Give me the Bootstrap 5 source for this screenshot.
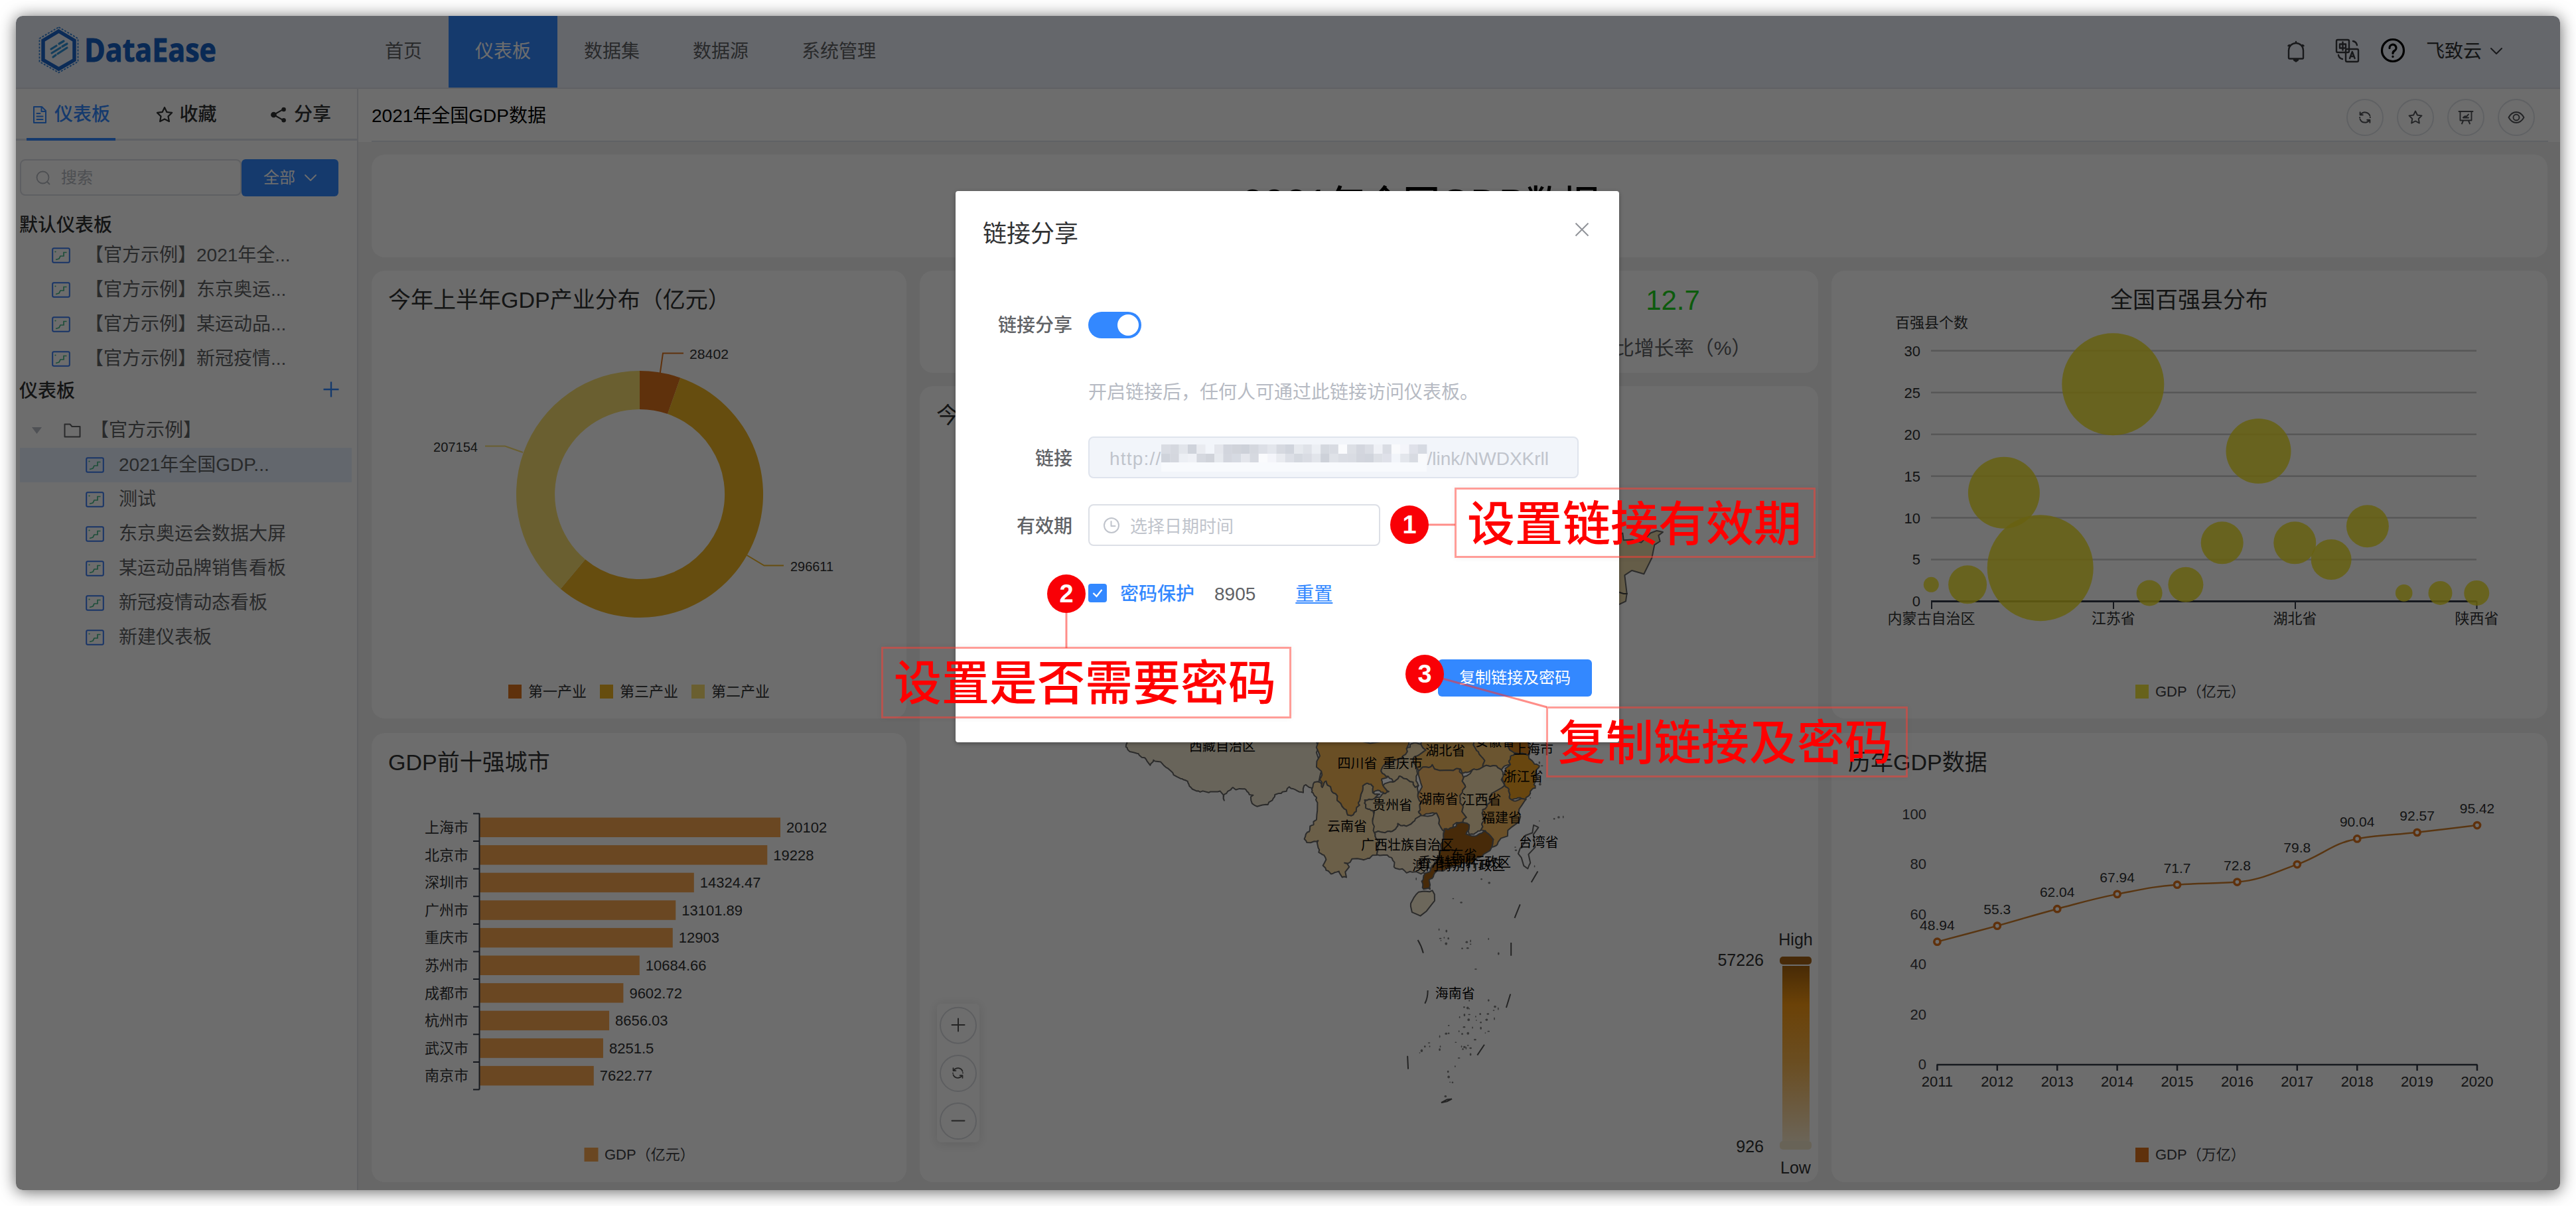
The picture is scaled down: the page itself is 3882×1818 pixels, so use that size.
<!DOCTYPE html>
<html lang="zh-CN">
<head>
<meta charset="utf-8">
<title>DataEase</title>
<link href="https://cdn.jsdelivr.net/npm/bootstrap@5.3.0/dist/css/bootstrap.min.css" rel="stylesheet">
<style>
body{margin:0;background:#fff;width:3882px;height:1818px;overflow:hidden;position:relative;font-family:"Liberation Sans","Noto Sans CJK SC",sans-serif;font-size:28px;line-height:40px;color:#303133}
svg{display:block;flex:none;overflow:visible}
svg text{font-family:"Liberation Sans","Noto Sans CJK SC",sans-serif}
.ico{fill:none;stroke:currentColor;stroke-linecap:round;stroke-linejoin:round}
.app-window{position:relative;width:3834px;height:1770px;margin:24px;border-radius:10px;overflow:hidden;background:#fff}
.app-shadow{position:absolute;left:24px;top:24px;width:3834px;height:1770px;border-radius:10px;box-shadow:0 2px 24px rgba(0,0,0,.62)}
.topnav{height:110px;background:#ecf0fa;border-bottom:2px solid #e0e3ea;padding-left:34px}
.topnav .nav-item2{padding:0 40px;height:108px;line-height:107px;color:#606266}
.topnav .on{background:#3388ff;color:#fff}
.side{width:516px;border-right:2px solid #e0e3e8;color:#606266}
.side-tabs{height:78px;border-bottom:3px solid #dfe4ed;color:#303133;font-weight:500;padding:2px 39px 0 24px}
.side-tabs .tab-on{color:#3388ff}
.tab-bar{width:134px;height:4px;background:#3388ff;margin:-4px 0 0 16px}
.search-box{width:334px;height:55px;border:2px solid #dcdfe6;border-radius:8px;color:#b4b8c0;font-size:24px;padding-left:21px}
.all-btn{width:146px;height:56px;background:#3388ff;color:#fff;border-radius:6px;font-size:24px}
.side-h{height:46px;line-height:46px;padding-left:5px;color:#303133;font-weight:500}
.side-row{height:52px;line-height:52px;white-space:nowrap}
.side-row.d1{padding-left:54px}
.side-row.d2{padding-left:99px;margin:0 8px 0 6px}
.side-row.sel{background:#e8f1ff}
.pagebar{height:80px;padding-left:20px;padding-right:18px}
.pagebar>div{border-bottom:2px solid #dfe3ea;color:#000}
.round-btn{width:56px;height:56px;border:2px solid #dfe2e8;border-radius:50%;color:#505257}
.board{background:#f0f0f0;flex:1;padding:19px 19px 12px 20px;display:grid;grid-template-columns:806px 1354px 1079px;grid-template-rows:155px 675px 679px;gap:20px}
.panel{background:#fff;border-radius:20px;overflow:hidden;display:flex;flex-direction:column}
.panel-low{margin-top:2px}
.panel-title{height:72px;flex:none;padding:16px 26px 0 25px;font-size:34px;line-height:56px;color:#303133}
.big-title{font-size:56px;font-weight:500;color:#000;line-height:150px;padding-right:118px}
.big-title span{font-size:59px;line-height:1}
.kpi-num{font-size:42px;line-height:52px;color:#1fd41f}
.kpi-name{font-size:30px;line-height:44px;margin-top:24px;color:#606266}
.shade{position:absolute;inset:0;background:rgba(0,0,0,.573)}
.share-modal{position:absolute;left:1440px;top:288px;width:1000px;height:831px;background:#fff;border-radius:4px;box-shadow:0 2px 6px rgba(0,0,0,.3);padding:45px 41px 0 0}
.f-label{width:176px;text-align:right;color:#606266;font-weight:500;margin-right:24px;line-height:36px;padding-top:4px}
.t-low{line-height:36px;padding-top:4px}
.switch-on{width:80px;height:40px;border-radius:20px;background:#3388ff;padding:4px}
.switch-on i{display:block;width:32px;height:32px;border-radius:50%;background:#fff;margin-left:auto}
.f-link{width:739px;height:63px;border:2px solid #dfe4ed;border-radius:8px;background:#f2f5fa;color:#c0c4cc;padding-left:30px}
.f-date{width:440px;height:63px;border:2px solid #dcdfe6;border-radius:8px;color:#c0c4cc;font-size:26px;padding-left:20px}
.copy-btn{width:232px;height:56px;background:#3388ff;color:#fff;border-radius:6px;font-size:24px}
.note-box{position:absolute;border:3px solid rgba(255,60,50,.5);color:#f00;font-size:72px;font-weight:500;line-height:104px;white-space:nowrap;box-shadow:0 0 8px rgba(0,0,0,.06)}
.note-dot{position:absolute;width:58px;height:58px;border-radius:50%;background:#f90006;color:#fff;font:700 38px/58px "Liberation Sans",sans-serif;text-align:center}
.note-lines{position:absolute;left:0;top:0}
</style>
</head>
<body>
<svg width="0" height="0" class="position-absolute">
 <defs>
  <symbol id="board" viewBox="0 0 28 24"><rect x="1.2" y="1.2" width="25.6" height="21.6" rx="2" fill="none" stroke="#3a7bf0" stroke-width="2"/><path d="M6 18.500l5-1.500 2-4h5V7.500h4.500" fill="none" stroke="#48b88a" stroke-width="1.700"/><circle cx="5.500" cy="6.500" r="1.100" fill="#48b88a"/></symbol>
  <symbol id="refresh" viewBox="0 0 24 24"><path d="M20 9A8.500 8.500 0 0 0 5 7.500M4 3.500V8h4.500M4 15a8.500 8.500 0 0 0 15 1.500M20 20.500V16h-4.500M3.500 12v.5M20.500 11.500v.5"/></symbol>
  <symbol id="star" viewBox="0 0 24 24"><path d="M12 2.500l2.900 6 6.600.9-4.800 4.600 1.200 6.600L12 17.500l-5.900 3.100L7.300 14 2.500 9.400l6.600-.9z"/></symbol>
 </defs>
</svg>
<div class="app-shadow"></div>
<div class="app-window d-flex flex-column">
 <header class="topnav d-flex">
  <svg width="282" height="108" viewBox="58 24 282 108">
   <path d="M88.500 47l23.500 14v29.500L88.500 104 65 90.500V61z" fill="none" stroke="#1a66cc" stroke-width="5.500"/>
   <path d="M88.500 41l29 17v35L88.500 109.500 59.500 93V58z" fill="none" stroke="#2f7fd6" stroke-width="1.800" stroke-dasharray="3 2"/>
   <path d="M77 74l8-5m4-3l7-4M78 80l13-8m3-2l7-4M80 86l4-3m3-2l14-9" stroke="#2f92d8" stroke-width="3.200" stroke-linecap="round"/>
   <text x="127" y="93" font-size="49" font-weight="700" fill="#1661c4" stroke="#1661c4" textLength="199" lengthAdjust="spacingAndGlyphs" style="font-family:'Open Sans','Noto Sans',sans-serif">DataEase</text>
  </svg>
  <nav class="d-flex" style="margin-left:200px">
   <div class="nav-item2">首页</div><div class="nav-item2 on">仪表板</div><div class="nav-item2">数据集</div><div class="nav-item2">数据源</div><div class="nav-item2">系统管理</div>
  </nav>
  <svg class="ms-auto" width="438" height="108" viewBox="3420 24 438 108">
   <g class="ico" stroke="#303133" color="#3a3b3f" stroke-width="2.400">
    <path d="M3449 87v-11a11 11 0 0 1 22 0v11q0 1.500-1.500 1.500h-19q-1.500 0-1.500-1.500zM3460 63v2M3448.500 69l1.500-1M3471.500 69l-1.500-1M3457 90.500h6l-3 2z"/>
    <rect x="3521" y="60" width="19" height="19" rx="2"/><rect x="3535" y="74" width="19" height="19" rx="2"/>
    <path d="M3526 66.500h9v6h-9zM3530.500 63.500v12M3541 88l3.800-10 3.800 10M3542.500 85h4.500M3546 62q5 1 6 6M3524 83q1 5 6 6"/>
    <circle cx="3606" cy="76" r="16.500" stroke="#000" stroke-width="3.200"/><path d="M3601 72.500a5 5 0 1 1 7.500 4q-2.500 1.500-2.500 4M3606 85v.4" stroke="#000" stroke-width="3.200"/>
    <path d="M3754 73l8 8 8-8" stroke-width="2"/>
   </g>
   <text x="3656" y="87" font-size="28" fill="#303133">飞致云</text>
  </svg>
 </header>
 <div class="d-flex flex-grow-1">
  <aside class="side flex-shrink-0">
   <div class="side-tabs d-flex align-items-center justify-content-between">
    <div class="tab-on d-flex align-items-center gap-2"><svg class="ico" width="24" height="28" viewBox="0 0 24 28" stroke-width="2"><path d="M3 2h12l6 6v18H3zM14.500 2v7H21M7.500 12h5M7.500 16.500h9M7.500 21h9"/></svg><span style="margin-left:2px">仪表板</span></div>
    <div class="d-flex align-items-center gap-2" style="margin-right:12px"><svg class="ico" width="28" height="28" stroke-width="1.900"><use href="#star"/></svg><span>收藏</span></div>
    <div class="d-flex align-items-center gap-2"><svg width="26" height="26" viewBox="0 0 24 24"><path d="M19 4L5 12l14 8" fill="none" stroke="#303133" stroke-width="2"/><circle cx="5" cy="12" r="4" fill="#303133"/><circle cx="19" cy="4.500" r="3" fill="#303133"/><circle cx="19" cy="19.500" r="3" fill="#303133"/></svg><span style="margin-left:2px">分享</span></div>
   </div>
   <div class="tab-bar"></div>
   <div class="d-flex" style="padding:28px 0 0 6px">
    <div class="search-box d-flex align-items-center"><svg class="ico" width="24" height="24" viewBox="0 0 24 24" stroke-width="1.800"><circle cx="11.500" cy="11.500" r="9"/><path d="M18 18l3.500 3.500"/></svg><span style="margin-left:15px">搜索</span></div>
    <div class="all-btn d-flex align-items-center justify-content-center">全部<svg class="ico" style="margin-left:14px" width="18" height="12" viewBox="0 0 18 12" stroke-width="1.800"><path d="M1 2l8 8 8-8"/></svg></div>
   </div>
   <div class="side-h" style="margin-top:21px">默认仪表板</div>
   <div id="defaults" style="margin-top:-4px"></div>
   <div class="side-h d-flex justify-content-between align-items-center" style="padding-right:26px">仪表板<svg style="margin-bottom:6px" width="26" height="26" viewBox="0 0 26 26"><path d="M13 1.500v23M1.500 13h23" stroke="#3388ff" stroke-width="2.400"/></svg></div>
   <div class="side-row d-flex align-items-center" style="padding-left:24px;margin-top:10px"><svg width="15" height="10" viewBox="0 0 15 10"><path d="M0 0h15L7.500 10z" fill="#b9bdc6"/></svg><svg class="ico" style="margin:0 14px 0 33px" width="26" height="22" viewBox="0 0 26 22" stroke-width="2"><path d="M1.500 20.500v-19h8l3 3.500h12v15.500z"/></svg>【官方示例】</div>
   <div id="mine"></div>
  </aside>
  <main class="d-flex flex-column flex-grow-1">
   <div class="pagebar"><div class="h-100 d-flex align-items-center justify-content-between"><span style="padding-top:4px">2021年全国GDP数据</span>
    <div class="d-flex" style="gap:20px;padding:8px 20px 0 0">
     <div class="round-btn d-flex align-items-center justify-content-center"><svg class="ico" width="22" height="22" stroke-width="2.200"><use href="#refresh"/></svg></div>
     <div class="round-btn d-flex align-items-center justify-content-center"><svg class="ico" width="24" height="24" stroke-width="1.900"><use href="#star"/></svg></div>
     <div class="round-btn d-flex align-items-center justify-content-center"><svg class="ico" width="24" height="24" viewBox="0 0 24 24" stroke-width="1.900"><path d="M1.500 3h21M3.500 3v13.500h17V3M8 17l-2 4.500M16 17l2 4.500M8 12.500h8M8 12l3-2 1.500 1L16 7.500"/></svg></div>
     <div class="round-btn d-flex align-items-center justify-content-center"><svg class="ico" width="26" height="24" viewBox="0 0 26 24" stroke-width="1.900"><path d="M1.500 12Q6 4 13 4t11.500 8Q20 20 13 20T1.500 12z"/><circle cx="13" cy="12" r="4.500"/></svg></div>
    </div></div></div>
   <div class="board">
    <section class="panel" style="grid-column:1/4"><div class="big-title text-center"><span>2021</span>年全国<span>GDP</span>数据</div></section>
    <section class="panel"><div class="panel-title">今年上半年GDP产业分布（亿元）</div><svg id="donut" width="806" height="603" viewBox="560 480 806 603"></svg></section>
    <div class="d-flex flex-column" style="grid-row:2/4;grid-column:2;gap:20px">
     <div class="d-flex" style="height:154px;gap:20px">
      <section class="panel flex-fill w-100"></section>
      <section class="panel flex-fill w-100"></section>
      <section class="panel flex-fill w-100 text-center text-nowrap" style="padding-top:19px"><div class="kpi-num">12.7</div><div class="kpi-name">同比增长率（%）</div></section>
     </div>
     <section class="panel flex-grow-1"><div class="panel-title">今</div><svg id="cnmap" width="1354" height="1128" viewBox="1386 654 1354 1128"></svg></section>
    </div>
    <section class="panel" style="grid-column:3"><div class="panel-title text-center">全国百强县分布</div><svg id="bubble" width="1079" height="603" viewBox="2760 480 1079 603"></svg></section>
    <section class="panel panel-low"><div class="panel-title">GDP前十强城市</div><svg id="bars" width="806" height="605" viewBox="560 1177 806 605"></svg></section>
    <section class="panel panel-low" style="grid-column:3"><div class="panel-title">历年GDP数据</div><svg id="line" width="1079" height="605" viewBox="2760 1177 1079 605"></svg></section>
   </div>
  </main>
 </div>
 <div class="shade"></div>
</div>

<div class="share-modal">
 <div class="d-flex justify-content-between" style="padding-left:41px;font-size:36px;color:#303133"><span>链接分享</span><svg style="margin:2px 4px 0 0" width="22" height="22" viewBox="0 0 22 22"><path d="M1.500 1.500l19 19M20.500 1.500l-19 19" stroke="#909399" stroke-width="2"/></svg></div>
 <div class="d-flex align-items-center" style="margin-top:97px"><div class="f-label" style="padding-top:2px;line-height:38px">链接分享</div><div class="switch-on"><i></i></div></div>
 <div class="t-low" style="margin:60px 0 0 200px;color:#b6bac3">开启链接后，任何人可通过此链接访问仪表板。</div>
 <div class="d-flex align-items-center" style="margin-top:48px"><div class="f-label">链接</div><div class="f-link d-flex align-items-center"><span class="t-low" style="letter-spacing:1.200px">http://</span><svg id="mosaic" width="400" height="42" viewBox="0 0 400 42"></svg><span class="t-low">/link/NWDXKrll</span></div></div>
 <div class="d-flex align-items-center" style="margin-top:39px"><div class="f-label">有效期</div><div class="f-date d-flex align-items-center"><svg class="ico" width="26" height="26" viewBox="0 0 26 26" stroke-width="2"><circle cx="13" cy="13" r="11"/><path d="M12.500 7v7h6"/></svg><span class="t-low" style="margin-left:15px">选择日期时间</span></div></div>
 <div class="d-flex align-items-center" style="margin:51px 0 0 200px"><svg width="28" height="28" viewBox="0 0 28 28"><rect width="28" height="28" rx="4" fill="#3388ff"/><path d="M7.500 14l5 5 8-10" fill="none" stroke="#fff" stroke-width="2.300"/></svg><span class="t-low" style="margin-left:20px;color:#3388ff;font-weight:500">密码保护</span><span class="t-low" style="margin-left:30px;color:#606266">8905</span><span class="t-low" style="margin-left:60px;color:#3388ff;text-decoration:underline;text-underline-offset:3px">重置</span></div>
 <div class="copy-btn d-flex align-items-center justify-content-center ms-auto" style="margin-top:80px">复制链接及密码</div>
</div>

<svg class="note-lines" width="3882" height="1818" viewBox="0 0 3882 1818" fill="none" stroke="rgba(255,50,40,.55)" stroke-width="3"><path d="M2150 791h43M1607 922v55M2174 1023l157 43"/></svg>
<div class="note-box" style="left:2192px;top:735px;width:544px;height:106px;padding-left:16px">设置链接有效期</div>
<div class="note-box" style="left:1328px;top:975px;width:618px;height:108px;padding-left:16px">设置是否需要密码</div>
<div class="note-box" style="left:2330px;top:1065px;width:545px;height:107px;padding-left:15px">复制链接及密码</div>
<div class="note-dot" style="left:2095px;top:762px">1</div>
<div class="note-dot" style="left:1578px;top:866px">2</div>
<div class="note-dot" style="left:2118px;top:987px">3</div>

<script>
const $=id=>document.getElementById(id);
const T=(x,y,s,o={})=>`<text x="${x}" y="${y+(o.f||22)*.36}" font-size="${o.f||22}" fill="${o.c||'#303133'}" text-anchor="${o.a||'start'}" ${o.w?`textLength="${o.w}" lengthAdjust="spacingAndGlyphs"`:''}>${s}</text>`;
const R=(x,y,w,h,c)=>`<rect x="${x}" y="${y}" width="${w}" height="${h}" fill="${c}"/>`;
const P=(d,c,w=2)=>`<path d="${d}" fill="none" stroke="${c}" stroke-width="${w}"/>`;
// sidebar lists
const ic='<svg width="28" height="24" style="margin-right:SPpx"><use href="#board"/></svg>';
$('defaults').innerHTML=['2021年全...','东京奥运...','某运动品...','新冠疫情...'].map(t=>`<div class="side-row d1 d-flex align-items-center">${ic.replace('SP','22')}【官方示例】${t}</div>`).join('');
$('mine').innerHTML=['2021年全国GDP...','测试','东京奥运会数据大屏','某运动品牌销售看板','新冠疫情动态看板','新建仪表板'].map((t,i)=>`<div class="side-row d2 d-flex align-items-center ${i?'':'sel'}">${ic.replace('SP','22')}${t}</div>`).join('');
// donut
(()=>{const cx=964,cy=745,ro=186,ri=128,v=[28402,296611,207154],c=['#de731c','#efb425','#f8de70'];let a=0,h='';const t=v.reduce((p,q)=>p+q);
const pt=(r,a)=>[cx+r*Math.sin(a),cy-r*Math.cos(a)].map(n=>n.toFixed(1)).join(' ');
v.forEach((n,i)=>{const b=a+n/t*2*Math.PI,l=b-a>Math.PI?1:0;h+=`<path d="M${pt(ro,a)}A${ro} ${ro} 0 ${l} 1 ${pt(ro,b)}L${pt(ri,b)}A${ri} ${ri} 0 ${l} 0 ${pt(ri,a)}Z" fill="${c[i]}"/>`;a=b});
h+=P('M994.700 563L999 532.500H1030',c[0])+P('M1125.600 837L1151.500 852.500H1181',c[1])+P('M788 682L761 672.500H731',c[2]);
h+=T(1039,533,'28402',{f:21,w:59})+T(1191,853.500,'296611',{f:21,w:65})+T(653,673.500,'207154',{f:21,w:67});
[['第一产业',766],['第三产业',904],['第二产业',1042]].forEach(([s,x],i)=>h+=R(x,1032,20,21,c[i])+T(x+30,1042,s));
$('donut').innerHTML=h})();
// horizontal bars
(()=>{const d=[['上海市',20102],['北京市',19228],['深圳市',14324.47],['广州市',13101.89],['重庆市',12903],['苏州市',10684.66],['成都市',9602.72],['杭州市',8656.03],['武汉市',8251.5],['南京市',7622.77]];let h='';
d.forEach(([n,v],i)=>{const y=1247+41.6*i,w=v/20102*453;h+=R(723,y-14.500,w,29.500,'#f8a650')+T(706,y,n,{a:'end'})+T(723+w+9,y,v)});
let p='M722.500 1226V1642.500';for(let i=0;i<=10;i++)p+=`M713 ${1226.500+41.600*i}h9.500`;
h+=P(p,'#333a48')+R(880.500,1730,21,21,'#f8a650')+T(911,1740.500,'GDP（亿元）',{c:'#404145'});$('bars').innerHTML=h})();
// bubbles
(()=>{const y0=906.5,k=12.59,x0=2910.3,dx=54.8;let h='';
for(let v=0;v<=30;v+=5){const y=y0-k*v;h+=P(`M2910 ${y}H3732`,v?'#ccc':'#333a48',v?2.500:3)+T(2894,y,v,{a:'end'})}
h+=P('M2911 906v12M3185 906v12M3459 906v12M3732.500 906v12','#333a48');
[[0,2,11.5],[1,2,29],[2,13,54],[3,4,80],[5,26,77],[6,1,19.5],[7,2,26.5],[8,7,32],[9,18,49],[10,7,32],[11,5,30.5],[12,9,32],[13,1,12.8],[14,1,18],[15,1,19]].forEach(([i,v,r])=>h+=`<circle cx="${x0+dx*i}" cy="${y0-k*v}" r="${r}" fill="#f2e226" fill-opacity=".84"/>`);
h+=T(2856,486.500,'百强县个数');[['内蒙古自治区',2910.500],['江苏省',3184.700],['湖北省',3458.500],['陕西省',3732.500]].forEach(([s,x])=>h+=T(x,932,s,{a:'middle'}));
h+=R(3218,1032,20,21,'#f2e640')+T(3248,1042,'GDP（亿元）',{c:'#404145'});$('bubble').innerHTML=h})();
// yearly line
(()=>{const v=[48.94,55.3,62.04,67.94,71.7,72.8,79.8,90.04,92.57,95.42],pts=v.map((n,i)=>[2919.4+90.4*i,1604.5-n*3.777]);let h='';
const m=[];for(let i=0;i<10;i++){const s=j=>(pts[j+1][1]-pts[j][1])/90.4;if(!i)m.push(s(0));else if(i==9)m.push(s(8));else{const a=s(i-1),b=s(i);m.push(2*a*b/(a+b))}}
let p=`M${pts[0]}`;for(let i=0;i<9;i++)p+=`C${pts[i][0]+36} ${pts[i][1]+36*m[i]} ${pts[i+1][0]-36} ${pts[i+1][1]-36*m[i+1]} ${pts[i+1]}`;
h+=P(p,'#d07e2a',2.5);
pts.forEach(([x,y],i)=>h+=`<circle cx="${x}" cy="${y}" r="4.600" fill="#fff" stroke="#de731c" stroke-width="3.600"/>`+T(x,y-25.5,v[i],{a:'middle',f:21})+T(x,1630,2011+i,{a:'middle'}));
for(let n=0;n<=100;n+=20)h+=T(2903,1604-n*3.77,n,{a:'end',c:'#404145',f:22});
let t='M2918.500 1605H3733.500';for(let i=0;i<10;i++)t+=`M${2919.400+90.400*i} 1605v9`;h+=P(t,'#333a48',2.500);
h+=R(3218,1730,20,22,'#de731c')+T(3248,1740.500,'GDP（万亿）',{c:'#404145'});$('line').innerHTML=h})();
// map regions
(()=>{const reg=[
['#f4ead3','36,24 38,48 60,60 82,78 108,108 118,88 150,108 178,136 192,152 218,165 228,180 252,206 290,212 325,206 338,242 345,215 365,192 395,198 412,210 428,222 432,260 474,258 490,235 515,215 540,190 565,205 584,212 592,182 612,195 628,185 634,160 636,100 625,0 36,0'],
['#fbdea9','612,195 628,170 643,192 655,168 672,205 690,225 705,265 722,297 748,284 755,250 768,205 782,176 795,180 800,212 822,218 800,240 775,240 778,270 800,280 800,320 808,380 820,400 812,450 780,465 735,465 712,480 718,535 705,535 695,512 670,522 645,490 648,450 632,440 630,395 595,402 592,370 605,340 625,315 628,250 625,230 610,210'],
['#f8b957','625,0 632,60 640,130 637,165 643,192 655,168 672,205 690,225 705,265 722,297 748,284 755,250 768,205 782,176 795,180 800,212 822,205 838,216 850,208 832,185 828,160 848,150 826,130 835,108 858,95 890,80 905,45 920,0'],
['#f8e1b2','905,45 920,26 950,26 965,50 930,75 925,95 940,120 935,150 942,185 932,192 905,160 882,150 862,172 848,150 826,130 835,108 858,95 890,80'],
['#f8c062','950,0 950,26 965,50 930,75 925,95 940,120 942,130 955,115 985,106 1050,128 1072,122 1080,138 1110,125 1142,115 1138,75 1120,45 1122,0'],
['#fac872','1122,0 1120,45 1138,75 1142,115 1165,112 1200,125 1228,105 1228,80 1240,60 1225,0'],
['#d9841c','1225,0 1240,60 1285,70 1292,40 1290,0'],
['#f3a425','1228,80 1240,65 1285,70 1295,90 1318,110 1308,150 1305,195 1290,215 1276,238 1250,232 1232,240 1222,205 1210,185 1202,150 1212,120 1228,105'],
['#f8e1b2','1142,115 1165,112 1200,125 1205,150 1210,185 1180,215 1165,225 1155,265 1140,290 1136,355 1120,365 1100,372 1090,340 1078,330 1080,270 1072,235 1088,190 1082,155 1110,125'],
['#fdc06c','942,130 955,115 985,106 1050,128 1072,122 1082,155 1088,190 1072,235 1080,270 1078,330 1050,335 1035,352 1010,362 1005,330 998,290 975,292 950,300 942,285 950,250 940,220'],
['#f8e1b2','862,172 882,150 905,160 932,192 942,185 940,220 950,250 942,285 948,302 930,320 905,340 878,330 860,360 838,365 805,365 800,330 800,280 778,270 775,240 805,235 830,216 850,208 832,185'],
['#fbeacc','805,365 838,365 860,360 878,330 905,340 930,320 955,300 998,290 1005,330 1020,370 1010,410 1005,465 985,500 950,522 905,518 870,500 862,470 845,450 812,450 820,400'],
['#f9bc60','1155,265 1165,225 1210,185 1222,205 1232,240 1276,238 1255,275 1230,345 1190,400 1170,420 1168,380 1150,358 1136,355 1140,290'],
['#a66217','1020,370 1022,350 1050,345 1060,332 1100,335 1090,370 1130,370 1150,358 1168,380 1170,420 1140,455 1110,480 1060,490 1020,510 990,525 975,545 978,580 958,580 952,550 960,520 985,490 1005,465 1010,410'],
['#fff','1300,336 1315,345 1305,420 1290,480 1282,502 1262,460 1258,425 1275,375'],
['#fdf0d6','935,600 960,588 985,585 992,605 982,640 948,682 922,668 918,635']];
const hs=(x,y)=>{const s=Math.sin(x*12.9898+y*78.233)*43758.5453;return s-Math.floor(s)-.5};
const sub=(a,b,n)=>{const L=Math.hypot(a[0]-b[0],a[1]-b[1]);if(!n||L<7)return[a];const x=(a[0]+b[0])/2,y=(a[1]+b[1])/2,m=[x+hs(x,y)*L*.45,y+hs(y,x)*L*.45];return[...sub(a,m,n-1),...sub(m,b,n-1)]};
const poly=([c,s],k=2)=>{const p=s.split(' ').map(q=>q.split(',').map(Number));let o=[];p.forEach((a,i)=>o.push(...sub(a,p[(i+1)%p.length],k)));return`<polygon points="${o.map(q=>q.map(n=>n.toFixed(1)).join()).join(' ')}" fill="${c}" stroke="#666" stroke-width="2" vector-effect="non-scaling-stroke" stroke-linejoin="round"/>`};
let h='<g transform="translate(1681 1111) scale(.4847 .3954)">'+reg.map(r=>poly(r,r[0]=='#fff'||r[0]=='#fdf0d6'?1:2)).join('');
h+='<path d="M1313 512l-20 42M1258 638l-17 52M1230 784v50M1228 980l-13 52M1147 1173l-22 40M908 1216l2 50M971 966q0 30-9 50M940 774q12 24 17 50M1013 1394l18-12 15-2-15 9z" fill="none" stroke="#555" stroke-width="2" vector-effect="non-scaling-stroke"/>';
[[1318,320],[1364,312],[1378,306],[1392,305],[1243,420],[1245,432],[1303,493],[1318,98],[1326,110],[1322,130],[1313,160],[1320,180],[1290,232],[1138,542],[1162,556],[935,541],[1050,616],[1075,631],[1006,734],[1029,740],[1010,768],[1022,765],[1035,768],[1028,788],[1012,776],[1078,806],[1092,782],[1104,778],[1104,790],[1095,805],[1160,770],[1191,826],[1120,885],[1100,1005],[1160,1004],[1095,1033],[1100,1036],[1084,1030],[1180,1028],[1190,1036],[1176,1042],[1158,1056],[1070,1068],[1085,1060],[1100,1058],[1120,1066],[1134,1056],[1098,1078],[1122,1080],[1136,1088],[1154,1078],[1178,1074],[1036,1100],[1084,1106],[1110,1108],[1136,1110],[1160,1122],[1068,1122],[1078,1132],[1096,1130],[1150,1128],[1036,1130],[1028,1131],[1008,1142],[1058,1164],[1118,1154],[1010,1180],[1008,1192],[975,1166],[977,1180],[962,1180],[952,1196],[946,1204],[1080,1190],[1085,1182],[1090,1186],[1096,1176],[1104,1186],[1076,1180],[1104,1210],[1068,1224],[1056,1256],[1034,1276],[1036,1296],[1040,1316],[1048,1317],[1026,1370]].forEach(([x,y],i)=>h+=`<ellipse cx="${x}" cy="${y}" rx="${1.8+i%3}" ry="${2.2+i%4}" fill="#808080"/>`);
h+='</g><g transform="translate(2400 400) scale(.3333 .3571)">'+poly(['#ecd9a8','100,1150 136,1130 140,1160 180,1158 220,1170 262,1130 290,1120 318,1126 298,1140 305,1165 280,1180 268,1235 232,1303 178,1288 145,1308 155,1385 150,1418 100,1440'],0)+'<path d="M120 1380l20 6h18" fill="none" stroke="#444" stroke-width="2" vector-effect="non-scaling-stroke"/></g>';
[['西藏自治区',332,36],['四川省',752,100],['重庆市',893,100],['湖北省',1026,52],['安徽省',1180,18],['上海市',1300,48],['浙江省',1268,150],['湖南省',1005,236],['江西省',1138,240],['贵州省',861,261],['福建省',1201,307],['云南省',720,342],['广西壮族自治区',908,412],['广东省',1062,450],['香港特别行政区',1085,478],['澳门特别行政区',1067,490],['台湾省',1316,402],['海南省',1056,978]].forEach(([s,x,y])=>h+=T(1681+x*.4847,1111+y*.3954,s,{a:'middle',f:20,c:'#000'}));
h+='<defs><linearGradient id="heat" x1="0" y1="0" x2="0" y2="1"><stop offset="0" stop-color="#a8640f"/><stop offset=".22" stop-color="#fa9a12"/><stop offset=".55" stop-color="#f9b54e"/><stop offset="1" stop-color="#fbeacc"/></linearGradient></defs>';
h+='<rect x="2686" y="1456" width="41" height="264" fill="url(#heat)"/><rect x="2682" y="1442" width="48" height="12" rx="5" fill="#a66217"/><rect x="2682" y="1720" width="48" height="13" rx="5" fill="#f4e8cc"/>';
h+=T(2706,1416,'High',{f:25,a:'middle'})+T(2706,1760,'Low',{f:25,a:'middle'})+T(2658,1447,'57226',{f:25,a:'end'})+T(2658,1728,'926',{f:25,a:'end'});
h+='<rect x="1412" y="1513" width="64" height="209" rx="6" fill="#fff" style="filter:drop-shadow(0 2px 8px rgba(0,0,0,.12))"/><g class="ico" style="color:#555" stroke-width="2">'+[1545.7,1618,1690].map(y=>`<circle cx="1444" cy="${y}" r="27" stroke="#d9dbe0" stroke-width="2"/>`).join('')+'<path d="M1434.500 1545h19M1444 1535.500v19M1434.500 1689.500h19"/><svg x="1433" y="1607" width="21" height="21"><use href="#refresh"/></svg></g>';
$('cnmap').innerHTML=h})();
// masked part of the link
(()=>{const g=['d9dce3','d5d8df','e2e5eb','cfd3db','e9ebf0','f2f5fa','e4e6ec','d2d5dd','d0d3da','cdd1d9','d4d7de','dcdfe6','e3e6ec','d6d9e0','d0d4dc','e6e9ee','dfe2e8','eceff4','d4d8df','d8dbe2','fafbfd','dcdfe5','d3d6de','dadde4','eff1f6','d9dce3','f9fafc','f4f5fa','dfe1e9','d6dae2'];let h='';g.forEach((c,i)=>{h+=R(i*13.34,1,13.5,14,'#'+c)+R(i*13.34,15,13.5,13,'#'+g[(i*7+3)%30])});h+=R(0,28,400,14,'#f8fafd');$('mosaic').innerHTML=h})();
</script>
<script src="https://cdn.jsdelivr.net/npm/bootstrap@5.3.0/dist/js/bootstrap.bundle.min.js"></script>
</body>
</html>
